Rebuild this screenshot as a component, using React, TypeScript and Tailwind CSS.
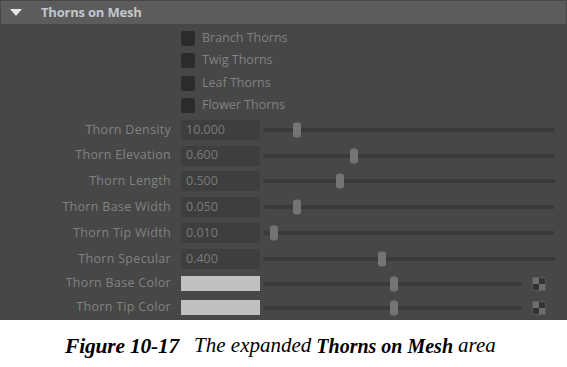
const checks = ["Branch Thorns", "Twig Thorns", "Leaf Thorns", "Flower Thorns"];

const sliders = [
	{ label: "Thorn Density", value: "10.000", pos: 34 },
	{ label: "Thorn Elevation", value: "0.600", pos: 91 },
	{ label: "Thorn Length", value: "0.500", pos: 77 },
	{ label: "Thorn Base Width", value: "0.050", pos: 34 },
	{ label: "Thorn Tip Width", value: "0.010", pos: 11 },
	{ label: "Thorn Specular", value: "0.400", pos: 119 },
];

const colors = [
	{ label: "Thorn Base Color", pos: 131 },
	{ label: "Thorn Tip Color", pos: 131 },
];

const Handle = ({ pos }: { pos: number }) => (
	<div
		className="absolute top-1/2 -translate-y-1/2 -translate-x-1/2 w-[8px] h-[15px] rounded-[3px] bg-[#747474]"
		style={{ left: pos }}
	/>
);

const Checker = () => (
	<div className="grid grid-cols-2 w-[14px] h-[14px] border border-[#5a5a5a]">
		<div className="bg-[#6e6e6e]" />
		<div className="bg-[#333333]" />
		<div className="bg-[#333333]" />
		<div className="bg-[#6e6e6e]" />
	</div>
);

export default function App() {
	return (
		<div className="w-[567px] h-[367px] bg-white flex flex-col font-['Open_Sans','Noto_Sans',sans-serif]">
			{/* panel */}
			<div className="h-[320px] bg-[#474747] pt-px">
				<div className="mx-px h-[23px] bg-[#5c5c5c] flex items-center">
					<svg width="12" height="7" viewBox="0 0 12 7" className="ml-[9px]">
						<polygon points="0,0 12,0 6,7" fill="#e6e6e6" />
					</svg>
					<span className="ml-[19px] text-[13px] font-bold text-[#c3c6cc] tracking-[-0.2px]">Thorns on Mesh</span>
				</div>

				<div className="pt-[3px]">
					{checks.map((c) => (
						<div key={c} className="h-[22.5px] flex items-center pl-[181px]">
							<div className="w-[14px] h-[15px] rounded-[2px] bg-[#2c2c2c]" />
							<span className="ml-[7px] text-[12.5px] text-[#818181]">{c}</span>
						</div>
					))}
				</div>

				{sliders.map((s) => (
					<div key={s.label} className="h-[25.8px] flex items-center">
						<div className="w-[172px] pr-[1px] text-right text-[12.5px] tracking-[0.3px] text-[#818181]">{s.label}</div>
						<div className="ml-[9px] w-[79px] h-[20px] rounded-[2px] bg-[#3e3e3e] flex items-center pl-[5px] text-[12.5px] text-[#7a7a7a]">
							{s.value}
						</div>
						<div className="relative ml-[3px] w-[292px] h-[4px] rounded-full bg-[#3a3a3a]">
							<Handle pos={s.pos} />
						</div>
					</div>
				))}

				{colors.map((c) => (
					<div key={c.label} className="h-[24px] flex items-center">
						<div className="w-[172px] pr-[1px] text-right text-[12.5px] tracking-[0.3px] text-[#818181]">{c.label}</div>
						<div className="ml-[9px] w-[79px] h-[15px] bg-[#c0c0c0]" />
						<div className="relative ml-[3px] w-[259px] h-[4px] rounded-full bg-[#3a3a3a]">
							<Handle pos={c.pos} />
						</div>
						<div className="ml-[10px]">
							<Checker />
						</div>
					</div>
				))}
			</div>

			{/* caption */}
			<div className="flex-1 flex items-center pl-[65px] pt-[5px] font-['Liberation_Serif',serif] italic text-[21px] text-black whitespace-nowrap">
				<span className="font-bold text-[21.5px] tracking-[-0.2px]">Figure 10-17</span>
				<span className="ml-[15px]">The expanded</span>
				<span className="ml-[5px] font-bold text-[20px]">Thorns on Mesh</span>
				<span className="ml-[5px]">area</span>
			</div>
		</div>
	);
}
